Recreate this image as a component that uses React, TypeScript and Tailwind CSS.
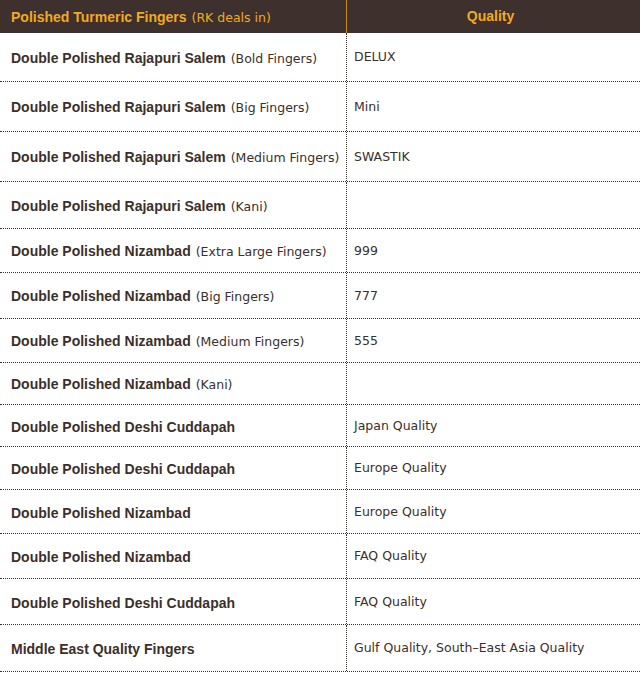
import React from "react";

type Row = { b: string; n?: string; q: string; h: string };

const rows: Row[] = [
  { b: "Double Polished Rajapuri Salem", n: "(Bold Fingers)", q: "DELUX", h: "h-[49px]" },
  { b: "Double Polished Rajapuri Salem", n: "(Big Fingers)", q: "Mini", h: "h-[50px]" },
  { b: "Double Polished Rajapuri Salem", n: "(Medium Fingers)", q: "SWASTIK", h: "h-[50px]" },
  { b: "Double Polished Rajapuri Salem", n: "(Kani)", q: "", h: "h-[47px]" },
  { b: "Double Polished Nizambad", n: "(Extra Large Fingers)", q: "999", h: "h-[44px]" },
  { b: "Double Polished Nizambad", n: "(Big Fingers)", q: "777", h: "h-[46px]" },
  { b: "Double Polished Nizambad", n: "(Medium Fingers)", q: "555", h: "h-[44px]" },
  { b: "Double Polished Nizambad", n: "(Kani)", q: "", h: "h-[42px]" },
  { b: "Double Polished Deshi Cuddapah", q: "Japan Quality", h: "h-[42px]" },
  { b: "Double Polished Deshi Cuddapah", q: "Europe Quality", h: "h-[43px]" },
  { b: "Double Polished Nizambad", q: "Europe Quality", h: "h-[44px]" },
  { b: "Double Polished Nizambad", q: "FAQ Quality", h: "h-[45px]" },
  { b: "Double Polished Deshi Cuddapah", q: "FAQ Quality", h: "h-[46px]" },
  { b: "Middle East Quality Fingers", q: "Gulf Quality, South–East Asia Quality", h: "h-[47px]" },
];

const sans = "font-['Liberation_Sans',Arial,sans-serif]";
const verd = "font-['DejaVu_Sans',Verdana,sans-serif]";

export default function App() {
  return (
    <div className="w-[640px] h-[674px] bg-white text-[#3b2f2c]">
      <div className="flex h-[33px] bg-[#3d302d]">
        <div className="w-[347px] border-r border-[#c98a1a] flex items-center pl-[11px] text-[#f2aa1f]">
          <p className="leading-[16px]">
            <span className={`${sans} font-bold text-[14px]`}>Polished Turmeric Fingers</span>
            <span className={`${verd} text-[12.5px] ml-[5px]`}>(RK deals in)</span>
          </p>
        </div>
        <div className={`flex-1 flex items-center justify-center pr-[6px] text-[#f2aa1f] font-bold text-[14px] ${sans}`}>
          Quality
        </div>
      </div>
      {rows.map((r, i) => (
        <div key={i} className={`flex ${r.h} border-b border-dotted border-[#3b2f2c]`}>
          <div className="w-[347px] border-r border-dotted border-[#3b2f2c] flex items-center pl-[11px] pt-[1px]">
            <p className="leading-[16px]">
              <span className={`${sans} font-bold text-[14px]`}>{r.b}</span>
              {r.n && <span className={`${verd} text-[12.5px] ml-[5px]`}>{r.n}</span>}
            </p>
          </div>
          <div className={`flex-1 flex items-center pl-[7px] pt-[1px] ${verd} text-[12.5px]`}>{r.q}</div>
        </div>
      ))}
    </div>
  );
}
